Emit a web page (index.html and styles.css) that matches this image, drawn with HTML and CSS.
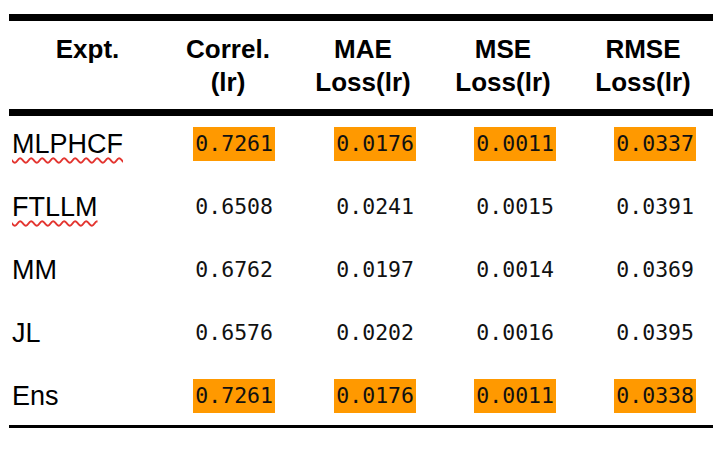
FILE: index.html
```html
<!DOCTYPE html>
<html>
<head>
<meta charset="utf-8">
<link rel="stylesheet" href="styles.css">
</head>
<body>
<div class="table">
  <div class="head">
    <div class="hcell c1">Expt.</div>
    <div class="hcell c2">Correl.<br>(lr)</div>
    <div class="hcell">MAE<br>Loss(lr)</div>
    <div class="hcell">MSE<br>Loss(lr)</div>
    <div class="hcell">RMSE<br>Loss(lr)</div>
  </div>
  <div class="body">
    <div class="row">
      <div class="name"><span class="typo">MLPHCF</span></div>
      <div class="val c2"><span class="num hl">0.7261</span></div>
      <div class="val"><span class="num hl">0.0176</span></div>
      <div class="val"><span class="num hl">0.0011</span></div>
      <div class="val"><span class="num hl">0.0337</span></div>
    </div>
    <div class="row">
      <div class="name"><span class="typo">FTLLM</span></div>
      <div class="val c2"><span class="num">0.6508</span></div>
      <div class="val"><span class="num">0.0241</span></div>
      <div class="val"><span class="num">0.0015</span></div>
      <div class="val"><span class="num">0.0391</span></div>
    </div>
    <div class="row">
      <div class="name">MM</div>
      <div class="val c2"><span class="num">0.6762</span></div>
      <div class="val"><span class="num">0.0197</span></div>
      <div class="val"><span class="num">0.0014</span></div>
      <div class="val"><span class="num">0.0369</span></div>
    </div>
    <div class="row">
      <div class="name">JL</div>
      <div class="val c2"><span class="num">0.6576</span></div>
      <div class="val"><span class="num">0.0202</span></div>
      <div class="val"><span class="num">0.0016</span></div>
      <div class="val"><span class="num">0.0395</span></div>
    </div>
    <div class="row">
      <div class="name">Ens</div>
      <div class="val c2"><span class="num hl">0.7261</span></div>
      <div class="val"><span class="num hl">0.0176</span></div>
      <div class="val"><span class="num hl">0.0011</span></div>
      <div class="val"><span class="num hl">0.0338</span></div>
    </div>
  </div>
</div>
</body>
</html>
```
FILE: styles.css
```css
html, body {
  margin: 0;
  padding: 0;
  background: #ffffff;
}
body {
  width: 724px;
  height: 451px;
  overflow: hidden;
  font-family: "Liberation Sans", Arial, sans-serif;
  color: #000;
}
.table {
  margin: 14px 0 0 9px;
  width: 704px;
  border-top: 7px solid #000;
  border-bottom: 3px solid #000;
}
.head {
  display: grid;
  grid-template-columns: 144px 140px 140px 140px 140px;
  padding: 12px 0 10px;
  border-bottom: 7px solid #000;
}
.hcell {
  font-weight: bold;
  font-size: 26px;
  line-height: 33px;
  text-align: center;
}
.hcell.c1 { padding-left: 13px; }
.hcell.c2 { padding-left: 10px; }
.body {
  display: flex;
  flex-direction: column;
  gap: 29px;
  padding: 11px 0 12px;
}
.row {
  display: grid;
  grid-template-columns: 144px 140px 140px 140px 140px;
  height: 34px;
}
.name {
  padding-left: 3px;
  font-size: 27px;
  line-height: 34px;
}
.typo {
  text-decoration: underline wavy #e3342f;
  text-decoration-thickness: 1.5px;
  text-underline-offset: 4px;
  text-decoration-skip-ink: none;
}
.val {
  text-align: right;
  padding-right: 17px;
  line-height: 34px;
}
.val.c2 { padding-right: 18px; }
.num {
  display: inline-block;
  padding: 0 2px;
  font-family: "DejaVu Sans Mono", monospace;
  font-size: 21.5px;
  line-height: 34px;
  color: #111;
}
.hl {
  background: #ff9900;
}
```
